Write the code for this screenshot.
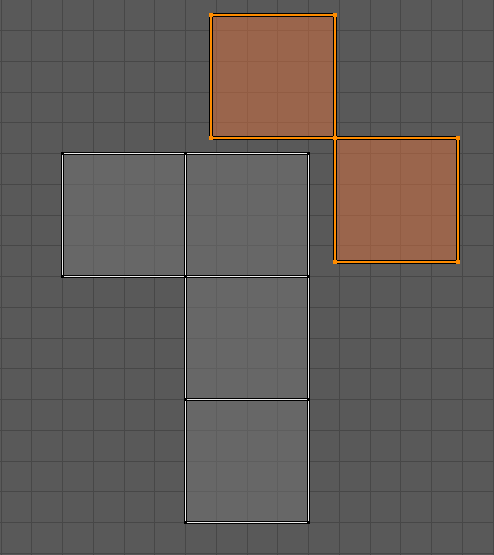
const STEP = 30.75;

// grid columns and rows line up with the grey island corners (62,153)
const cols = Array.from({ length: 17 }, (_, k) => Math.round(62 + (k - 2) * STEP));
const rows = Array.from({ length: 19 }, (_, k) => Math.round(153 + (k - 5) * STEP));

type Quad = [number, number, number, number]; // x0, y0, x1, y1

const greyFaces: Quad[] = [
  [62, 153, 185, 276],
  [185, 153, 308, 276],
  [185, 276, 308, 399],
  [185, 399, 308, 522],
];

const orangeFaces: Quad[] = [
  [211, 15, 335, 138],
  [335, 138, 458, 262],
];

const corners = (faces: Quad[]) => {
  const seen = new Set<string>();
  const pts: [number, number][] = [];
  faces.forEach(([x0, y0, x1, y1]) => {
    [
      [x0, y0],
      [x1, y0],
      [x0, y1],
      [x1, y1],
    ].forEach(([x, y]) => {
      const key = `${x},${y}`;
      if (!seen.has(key)) {
        seen.add(key);
        pts.push([x, y]);
      }
    });
  });
  return pts;
};

const Edges = ({
  faces,
  color,
  outer,
  inner,
  offset,
}: {
  faces: Quad[];
  color: string;
  outer: number;
  inner: number;
  offset: number;
}) => (
  <>
    {faces.map(([x0, y0, x1, y1], i) => (
      <rect
        key={`o${i}`}
        x={x0 + offset}
        y={y0 + offset}
        width={x1 - x0}
        height={y1 - y0}
        fill="none"
        stroke="#000"
        strokeWidth={outer}
      />
    ))}
    {faces.map(([x0, y0, x1, y1], i) => (
      <rect
        key={`i${i}`}
        x={x0 + offset}
        y={y0 + offset}
        width={x1 - x0}
        height={y1 - y0}
        fill="none"
        stroke={color}
        strokeWidth={inner}
      />
    ))}
  </>
);

const App = () => {
  return (
    <div className="w-[494px] h-[555px] overflow-hidden bg-[#595959]">
      <svg width={494} height={555} viewBox="0 0 494 555" shapeRendering="crispEdges" className="block">
        {/* background grid */}
        {cols.map((x) => (
          <rect key={`c${x}`} x={x} y={0} width={1} height={555} fill="#474747" />
        ))}
        {rows.map((y) => (
          <rect key={`r${y}`} x={0} y={y} width={494} height={1} fill="#474747" />
        ))}

        {/* face fills */}
        {greyFaces.map(([x0, y0, x1, y1], i) => (
          <rect key={`gf${i}`} x={x0} y={y0} width={x1 - x0} height={y1 - y0} fill="#767676" fillOpacity={0.5} />
        ))}
        {orangeFaces.map(([x0, y0, x1, y1], i) => (
          <rect key={`of${i}`} x={x0} y={y0} width={x1 - x0} height={y1 - y0} fill="#db713f" fillOpacity={0.5} />
        ))}

        <Edges faces={greyFaces} color="#ececec" outer={3} inner={1} offset={0.5} />
        <Edges faces={orangeFaces} color="#ff8c00" outer={4} inner={2} offset={0} />

        {/* vertices */}
        {corners(greyFaces).map(([x, y]) => (
          <rect key={`gv${x}-${y}`} x={x - 1} y={y - 1} width={3} height={3} fill="#000" />
        ))}
        {corners(orangeFaces).map(([x, y]) => (
          <rect key={`ov${x}-${y}`} x={x - 2} y={y - 2} width={4} height={4} fill="#ff8c00" />
        ))}
      </svg>
    </div>
  );
};

export default App;
